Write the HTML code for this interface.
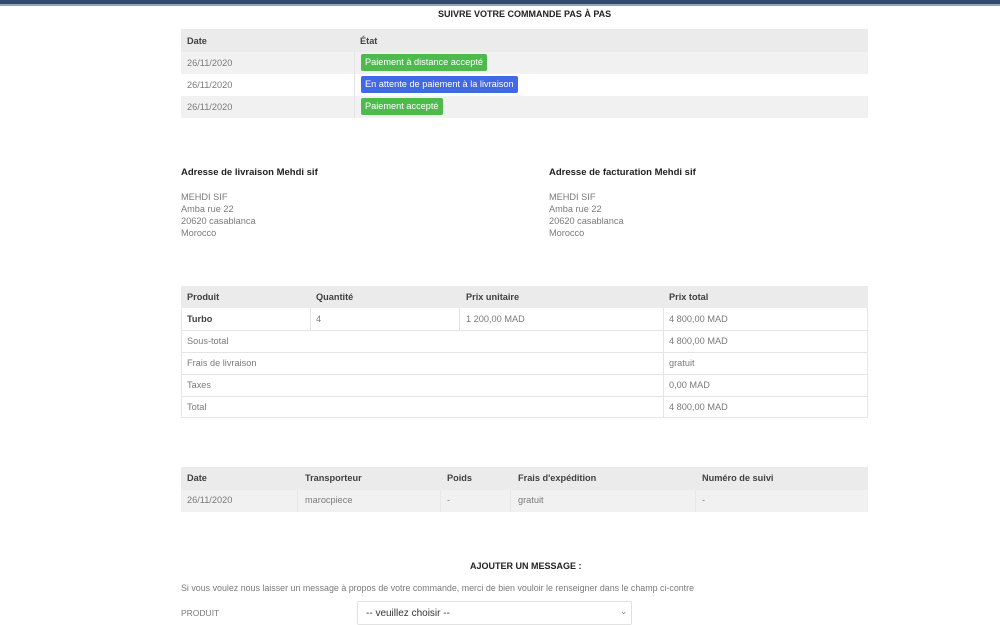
<!DOCTYPE html>
<html><head><meta charset="utf-8"><style>
*{margin:0;padding:0;box-sizing:border-box}
body{width:1000px;height:618px;overflow:hidden;background:#fff;font-family:"Liberation Sans",sans-serif;font-size:9.2px;color:#7a7a7a;position:relative}
.a{position:absolute;white-space:nowrap}
.bar1{position:absolute;left:0;top:0;width:1000px;height:4px;background:#2f4a6f}
.bar2{position:absolute;left:0;top:4px;width:1000px;height:2px;background:#97a3b5}
.h{font-weight:bold;color:#222;font-size:9.5px}
.th{font-weight:bold;color:#414141;font-size:9.2px}
.bg{position:absolute;background:#f1f1f1}
.badge{position:absolute;color:#fff;border-radius:2px;padding:0 4px;height:17px;line-height:17px;font-size:9.2px}
.vl{position:absolute;width:1px;background:#e4e4e4}
.hl{position:absolute;height:1px;background:#e4e4e4}
</style></head><body>
<div class="bar1"></div><div class="bar2"></div>
<div class="a h" style="left:438px;top:9px;font-size:9px">SUIVRE VOTRE COMMANDE PAS À PAS</div>

<div class="bg" style="left:181px;top:29px;width:687px;height:23px;background:#ebebeb"></div>
<div class="a th" style="left:187px;top:36px">Date</div>
<div class="a th" style="left:360px;top:36px">État</div>
<div class="bg" style="left:181px;top:52px;width:687px;height:22px"></div>
<div class="bg" style="left:181px;top:96px;width:687px;height:22px"></div>
<div class="vl" style="left:354px;top:52px;height:66px"></div>
<div class="a" style="left:187px;top:58px">26/11/2020</div>
<div class="a" style="left:187px;top:80px">26/11/2020</div>
<div class="a" style="left:187px;top:102px">26/11/2020</div>
<div class="badge" style="left:361px;top:54px;background:#4cbb4c">Paiement à distance accepté</div>
<div class="badge" style="left:361px;top:76px;background:#4169e1">En attente de paiement à la livraison</div>
<div class="badge" style="left:361px;top:98px;background:#4cbb4c">Paiement accepté</div>

<div class="a h" style="left:181px;top:167px">Adresse de livraison Mehdi sif</div>
<div class="a" style="left:181px;top:191px;line-height:12px">MEHDI SIF<br>Amba rue 22<br>20620 casablanca<br>Morocco</div>
<div class="a h" style="left:549px;top:167px">Adresse de facturation Mehdi sif</div>
<div class="a" style="left:549px;top:191px;line-height:12px">MEHDI SIF<br>Amba rue 22<br>20620 casablanca<br>Morocco</div>

<div class="bg" style="left:181px;top:286px;width:687px;height:22px;background:#ebebeb"></div>
<div style="position:absolute;left:181px;top:308px;width:687px;height:110px;border:1px solid #e6e6e6;border-top:none"></div>
<div class="hl" style="left:181px;top:330px;width:687px"></div>
<div class="hl" style="left:181px;top:352px;width:687px"></div>
<div class="hl" style="left:181px;top:374px;width:687px"></div>
<div class="hl" style="left:181px;top:396px;width:687px"></div>
<div class="vl" style="left:310px;top:308px;height:22px"></div>
<div class="vl" style="left:459px;top:308px;height:22px"></div>
<div class="vl" style="left:663px;top:308px;height:110px"></div>
<div class="a th" style="left:187px;top:292px">Produit</div>
<div class="a th" style="left:316px;top:292px">Quantité</div>
<div class="a th" style="left:466px;top:292px">Prix unitaire</div>
<div class="a th" style="left:669px;top:292px">Prix total</div>
<div class="a th" style="left:187px;top:314px">Turbo</div>
<div class="a" style="left:316px;top:314px">4</div>
<div class="a" style="left:466px;top:314px">1 200,00 MAD</div>
<div class="a" style="left:669px;top:314px">4 800,00 MAD</div>
<div class="a" style="left:187px;top:336px">Sous-total</div>
<div class="a" style="left:669px;top:336px">4 800,00 MAD</div>
<div class="a" style="left:187px;top:358px">Frais de livraison</div>
<div class="a" style="left:669px;top:358px">gratuit</div>
<div class="a" style="left:187px;top:380px">Taxes</div>
<div class="a" style="left:669px;top:380px">0,00 MAD</div>
<div class="a" style="left:187px;top:402px">Total</div>
<div class="a" style="left:669px;top:402px">4 800,00 MAD</div>

<div class="bg" style="left:181px;top:467px;width:687px;height:23px;background:#ebebeb"></div>
<div class="bg" style="left:181px;top:490px;width:687px;height:22px"></div>
<div class="vl" style="left:297px;top:490px;height:22px;background:#e8e8e8"></div>
<div class="vl" style="left:440px;top:490px;height:22px;background:#e8e8e8"></div>
<div class="vl" style="left:510px;top:490px;height:22px;background:#e8e8e8"></div>
<div class="vl" style="left:695px;top:490px;height:22px;background:#e8e8e8"></div>
<div class="a th" style="left:187px;top:473px">Date</div>
<div class="a th" style="left:305px;top:473px">Transporteur</div>
<div class="a th" style="left:447px;top:473px">Poids</div>
<div class="a th" style="left:518px;top:473px">Frais d'expédition</div>
<div class="a th" style="left:702px;top:473px">Numéro de suivi</div>
<div class="a" style="left:187px;top:495px">26/11/2020</div>
<div class="a" style="left:305px;top:495px">marocpiece</div>
<div class="a" style="left:447px;top:495px">-</div>
<div class="a" style="left:518px;top:495px">gratuit</div>
<div class="a" style="left:702px;top:495px">-</div>

<div class="a h" style="left:470px;top:561px;font-size:9px">AJOUTER UN MESSAGE :</div>
<div class="a" style="left:181px;top:583px;font-size:8.9px">Si vous voulez nous laisser un message à propos de votre commande, merci de bien vouloir le renseigner dans le champ ci-contre</div>
<div class="a" style="left:181px;top:608px;font-size:8.5px">PRODUIT</div>
<div style="position:absolute;left:357px;top:601px;width:275px;height:24px;border:1px solid #e2e2e2;border-radius:2px"></div>
<div class="a" style="left:366px;top:608px;color:#333;font-size:10px">-- veuillez choisir --</div>
<div class="a" style="left:620px;top:606px;color:#888;font-size:9px">⌄</div>
</body></html>
